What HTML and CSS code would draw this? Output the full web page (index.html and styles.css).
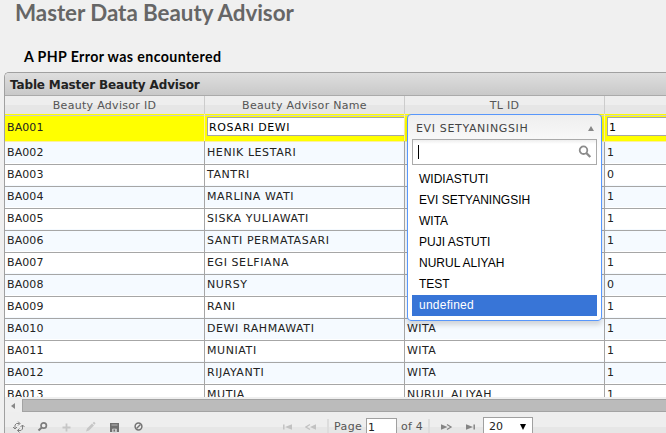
FILE: index.html
```html
<!DOCTYPE html>
<html lang="en">
<head>
<meta charset="utf-8">
<title>Master Data Beauty Advisor</title>
<link rel="stylesheet" href="styles.css">
</head>
<body>
<h1 class="page-title">Master Data Beauty Advisor</h1>
<h4 class="error">A PHP Error was encountered</h4>
<div class="grid">
  <div class="caption">Table Master Beauty Advisor</div>
  <div class="row head"><div>Beauty Advisor ID</div><div>Beauty Advisor Name</div><div>TL ID</div><div></div></div>
  <div class="body">
    <div class="row edit">
      <div>BA001</div>
      <div class="field"><input class="text" value="ROSARI DEWI"></div>
      <div class="picker">
        <div class="select">
          <div class="chosen"><span>EVI SETYANINGSIH</span><i class="arrow"></i></div>
          <div class="search"><i class="caret"></i>
            <svg width="14" height="14" viewBox="0 0 14 14"><circle cx="5.500" cy="5.200" r="3.800" fill="none" stroke="#8c8c8c" stroke-width="1.800"/><path d="M8.300 8l4 4" stroke="#8c8c8c" stroke-width="2.400"/></svg>
          </div>
          <ul>
            <li>WIDIASTUTI</li><li>EVI SETYANINGSIH</li><li>WITA</li><li>PUJI ASTUTI</li><li>NURUL ALIYAH</li><li>TEST</li><li class="active">undefined</li>
          </ul>
        </div>
      </div>
      <div class="field"><input class="text" value="1"></div>
    </div>
    <div class="row"><div>BA002</div><div>HENIK LESTARI</div><div></div><div>1</div></div>
    <div class="row"><div>BA003</div><div>TANTRI</div><div></div><div>0</div></div>
    <div class="row"><div>BA004</div><div>MARLINA WATI</div><div></div><div>1</div></div>
    <div class="row"><div>BA005</div><div>SISKA YULIAWATI</div><div></div><div>1</div></div>
    <div class="row"><div>BA006</div><div>SANTI PERMATASARI</div><div></div><div>1</div></div>
    <div class="row"><div>BA007</div><div>EGI SELFIANA</div><div></div><div>1</div></div>
    <div class="row"><div>BA008</div><div>NURSY</div><div></div><div>0</div></div>
    <div class="row"><div>BA009</div><div>RANI</div><div></div><div>1</div></div>
    <div class="row"><div>BA010</div><div>DEWI RAHMAWATI</div><div>WITA</div><div>1</div></div>
    <div class="row"><div>BA011</div><div>MUNIATI</div><div>WITA</div><div>1</div></div>
    <div class="row"><div>BA012</div><div>RIJAYANTI</div><div>WITA</div><div>1</div></div>
    <div class="row"><div>BA013</div><div>MUTIA</div><div>NURUL ALIYAH</div><div>1</div></div>
  </div>
  <div class="scrollbar"><i class="left"></i><div class="thumb"></div></div>
  <div class="pager">
    <div class="tools">
      <svg viewBox="0 0 12 12"><path d="M6.500 2.500H3.500L2 4v4M0 6l2 2 2-2M5 .5l2 2-2 2M4.500 9.500H8L9.500 8V4M7.500 6l2-2 2 2M6.500 7.500l-2 2 2 2" fill="none" stroke="#808080" stroke-width="1"/></svg>
      <svg viewBox="0 0 12 12"><circle cx="6.700" cy="4.500" r="2.700" fill="none" stroke="#7d7d7d" stroke-width="1.700"/><path d="M4.800 6.500L1.500 9.500" stroke="#7d7d7d" stroke-width="2"/></svg>
      <svg viewBox="0 0 12 12"><path d="M5.500 2.500v8M1.500 6.500h8" stroke="#c6c6c6" stroke-width="1.800"/></svg>
      <svg viewBox="0 0 12 12"><path d="M1 10.500l1-3 5-5 2 2-5 5zM7.600 2l1.400-1.300 1.600 1.600L9.400 3.700z" fill="#c6c6c6"/></svg>
      <svg viewBox="0 0 12 12"><path d="M1 2h9v9H1z" fill="#707070"/><path d="M2.500 4h6M3.500 8h4v3h-4z" stroke="#c8c8c8" fill="#c8c8c8" stroke-width=".8"/><path d="M4.500 8.500h1.500v2H4.500z" fill="#707070"/></svg>
      <svg viewBox="0 0 12 12"><circle cx="5.500" cy="5.500" r="3.400" fill="none" stroke="#747474" stroke-width="1.500"/><path d="M3.500 7.500l4-4" stroke="#747474" stroke-width="1.500"/></svg>
    </div>
    <svg class="nav first" viewBox="0 0 12 12"><path d="M1.800 3.500v5" stroke="#c2c2c2" stroke-width="1.500"/><path d="M10 3.300v5.400L3 6z" fill="#c2c2c2"/></svg>
    <svg class="nav prev" viewBox="0 0 12 12"><path d="M5 3.500L1 6l4 2.500" fill="none" stroke="#c2c2c2" stroke-width="1.300"/><path d="M11 3.300v5.400L5 6z" fill="#c2c2c2"/></svg>
    <i class="sep"></i>
    <span class="page">Page</span><input class="num" value="1"><span class="of">of 4</span>
    <i class="sep two"></i>
    <svg class="nav next" viewBox="0 0 12 12"><path d="M0 3.300v5.400L6.500 6z" fill="#858585"/><path d="M6 3.500l4 2.500-4 2.500" fill="none" stroke="#858585" stroke-width="1.300"/></svg>
    <svg class="nav last" viewBox="0 0 12 12"><path d="M1 3.300v5.400L8 6z" fill="#858585"/><path d="M9.200 3.500v5" stroke="#858585" stroke-width="1.500"/></svg>
    <div class="size"><span>20</span><i></i></div>
  </div>
</div>
</body>
</html>
```
FILE: styles.css
```css
* { box-sizing: border-box; }
body {
  margin: 0;
  height: 433px;
  overflow: hidden;
  background: #f0f0f0;
  font: 11px/14px "DejaVu Sans", sans-serif;
  color: #222;
}
.page-title {
  margin: 0 0 0 15px;
  height: 46px;
  font: bold 22.4px/26px Lato, sans-serif;
  letter-spacing: -0.05px;
  color: #666;
  white-space: nowrap;
}
.error {
  margin: 0 0 0 24px;
  height: 26px;
  font: bold 14.2px/22px Lato, sans-serif;
  letter-spacing: 0.38px;
  color: #000;
}
.grid {
  margin-left: 4px;
  width: 662px;
  border: 1px solid #a0a0a0;
  border-right: 0;
  border-radius: 5px 0 0 0;
  overflow: hidden;
}
.caption {
  height: 23px;
  padding-left: 5px;
  border-bottom: 1px solid #aaa;
  background: linear-gradient(#dedede, #c9c9c9);
  font: bold 12px/24px "DejaVu Sans", sans-serif;
  letter-spacing: -0.15px;
}
.row { display: grid; grid-template-columns: 200px 200px 200px 1fr; height: 22px; }
.row > div {
  min-width: 0;
  padding: 0 2px;
  line-height: 23px;
  letter-spacing: 0.58px;
  border-right: 1px solid #a6a6a6;
  border-bottom: 1px solid #a6a6a6;
  white-space: nowrap;
}
.row > div:first-child { letter-spacing: 0.1px; }
.row > div:last-child { border-right: 0; }
.row > div:nth-child(3) { letter-spacing: 0.4px; }
.row:nth-child(even) { background: #f5faff; }
.row.head { height: 18px; background: linear-gradient(#eee 50%, #e6e6e6 50%); }
.row.head > div,
.row.head > div:first-child {
  line-height: 19px;
  letter-spacing: 0.3px;
  text-align: center;
  color: #555;
  border-color: #ccc;
}
.body { height: 283px; overflow: hidden; background: #fff; }
.row.edit { height: 27px; background: #ff0; }
.row.edit > div { line-height: 27px; border-color: #fcefa1; }
.row.edit > .field { padding: 3px 0 0 2px; line-height: 0; overflow: hidden; }
.text {
  width: 204px;
  height: 19px;
  padding: 2px 1px 0;
  border: 1px solid #a6a6a6;
  background: #fff;
  font: 11px "DejaVu Sans", sans-serif;
  letter-spacing: 0.55px;
  color: #000;
}
.picker { position: relative; }
.select {
  position: absolute;
  z-index: 2;
  left: 2px;
  top: 0;
  width: 195px;
  height: 207px;
  padding: 0 4px;
  border: 1px solid #5897fb;
  border-radius: 4px;
  background: linear-gradient(#eee, #fff 40px);
  box-shadow: 0 4px 5px rgba(0, 0, 0, .15);
}
.chosen {
  display: flex;
  align-items: center;
  justify-content: space-between;
  height: 24px;
  padding: 3px 3px 0 4px;
  line-height: 20px;
  letter-spacing: 0.65px;
  color: #444;
}
.arrow { border: 3px solid transparent; border-top: 0; border-bottom: 5px solid #888; }
.search {
  display: flex;
  align-items: center;
  justify-content: space-between;
  height: 26px;
  padding: 0 4px 0 5px;
  border: 1px solid #aaa;
  background: linear-gradient(#eee, #fff 4px);
}
.caret { width: 1px; height: 14px; background: #000; }
.select ul {
  margin: 4px 0 0;
  padding: 0;
  list-style: none;
  font: 12px/20px "Liberation Sans", sans-serif;
  letter-spacing: 0;
  color: #000;
}
.select li { height: 21px; padding-left: 7px; }
.select .active { background: #3875d7; color: #fff; letter-spacing: 0.25px; }
.scrollbar { display: flex; align-items: center; height: 15px; padding-top: 2px; background: #efefef; }
.left { margin: 0 7px 0 6px; border: 3.5px solid transparent; border-left: 0; border-right: 4px solid #888; }
.thumb { flex: 1; height: 13px; border: 1px solid #a3a3a3; border-right: 0; background: #bbb; }
.pager {
  display: flex;
  align-items: flex-start;
  height: 30px;
  background: linear-gradient(#eee 15px, #e6e6e6 15px);
  color: #555;
}
.pager svg { flex: none; width: 12px; height: 12px; }
.tools { display: flex; gap: 12px; width: 277px; padding: 9px 0 0 8px; }
.pager .nav { margin-top: 9px; }
.pager .prev { margin-left: 11px; }
.sep { width: 2px; height: 18px; margin: 7px 0 0 10px; background: #ddd; }
.page { width: 32px; margin: 8px 0 0 5px; letter-spacing: 0.4px; }
.num {
  width: 31px;
  height: 20px;
  margin-top: 6px;
  padding: 0 1px 2px;
  border: 1px solid #a0a0a0;
  font: 11px "DejaVu Sans", sans-serif;
  color: #222;
}
.of { width: 23px; margin: 8px 0 0 4px; white-space: nowrap; letter-spacing: 0.2px; }
.sep.two { margin-left: 4px; }
.pager .next { margin-left: 11px; }
.pager .last { margin-left: 12px; }
.size {
  display: flex;
  align-items: center;
  justify-content: space-between;
  width: 50px;
  height: 20px;
  margin: 5px 0 0 6px;
  padding: 0 6px 0 5px;
  border: 1px solid #a0a0a0;
  background: #fff;
  color: #222;
}
.size i { border: 3.5px solid transparent; border-bottom: 0; border-top: 6px solid #000; }
```
